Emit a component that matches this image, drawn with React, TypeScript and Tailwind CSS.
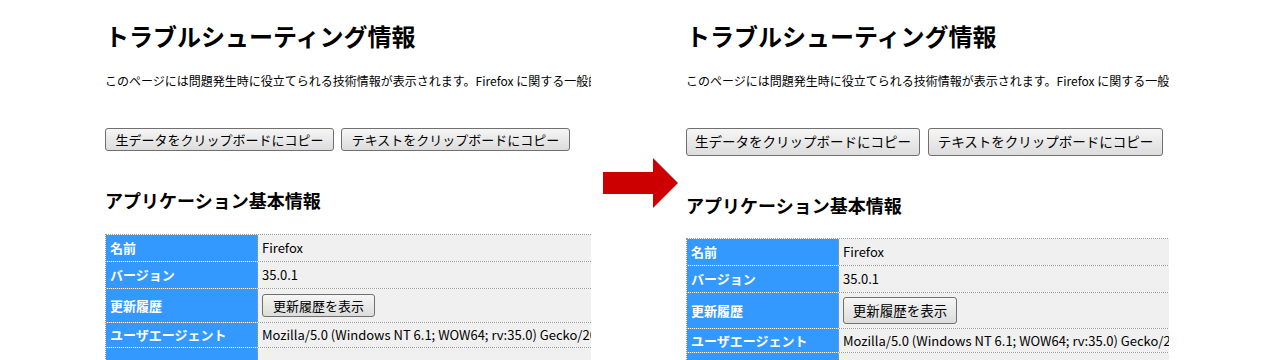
import React from "react";

const rows = [
  { label: "名前", value: "Firefox" },
  { label: "バージョン", value: "35.0.1" },
  { label: "更新履歴", value: "" },
  {
    label: "ユーザエージェント",
    value: "Mozilla/5.0 (Windows NT 6.1; WOW64; rv:35.0) Gecko/20100101 Firefox/35.0",
  },
  { label: "", value: "" },
];

type Variant = "old" | "new";

function Btn({ children, variant, className = "" }: { children: React.ReactNode; variant: Variant; className?: string }) {
  const size = variant === "old" ? "h-[23px] text-[13px]" : "h-[28px] text-[13.5px]";
  return (
    <button
      className={`${size} ${className} shrink-0 rounded-[3px] border border-[#707070] bg-gradient-to-b from-[#f6f6f6] to-[#dcdcdc] text-black leading-none whitespace-nowrap`}
    >
      {children}
    </button>
  );
}

function Panel({ variant }: { variant: Variant }) {
  const old = variant === "old";
  const rowH = old
    ? ["h-[27px]", "h-[27px]", "h-[34px]", "h-[25px]", "h-[27px]"]
    : ["h-[27px]", "h-[27px]", "h-[36px]", "h-[24px]", "h-[27px]"];
  return (
    <div className="text-black">
      <h1 className="mt-[20px] text-[24px] leading-[32px] font-bold whitespace-nowrap">トラブルシューティング情報</h1>
      <p className="mt-[20px] text-[12px] leading-[18px] whitespace-nowrap">
        このページには問題発生時に役立てられる技術情報が表示されます。Firefox に関する一般的な質問の答えは、サポートサイト をご覧ください。
      </p>
      <div className={`flex mt-[38px] ${old ? "gap-[7px]" : "gap-[8px]"}`}>
        <Btn variant={variant} className={old ? "w-[229px]" : "w-[234px]"}>生データをクリップボードにコピー</Btn>
        <Btn variant={variant} className={old ? "w-[229px]" : "w-[235px]"}>テキストをクリップボードにコピー</Btn>
      </div>
      <h2 className="mt-[37px] text-[18px] leading-[24px] font-bold whitespace-nowrap">アプリケーション基本情報</h2>
      <div className={`${old ? "mt-[22px]" : "mt-[21px]"} w-[700px] border-t border-l border-dotted border-[#9a9a9a]`}>
        {rows.map((r, i) => (
          <div key={i} className={`flex ${rowH[i]} border-b border-dotted border-[#9a9a9a]`}>
            <div className="w-[152px] shrink-0 bg-[#3399ff] border-r border-dotted border-[#9a9a9a] pl-[4px] flex items-center text-white text-[13px] font-bold whitespace-nowrap">
              {r.label}
            </div>
            <div className="flex-1 bg-[#f0f0f0] pl-[4px] flex items-center text-[13px] whitespace-nowrap">
              {r.label === "更新履歴" ? (
                <Btn variant={variant} className={old ? "w-[113px]" : "w-[114px] !h-[27px]"}>更新履歴を表示</Btn>
              ) : (
                r.value
              )}
            </div>
          </div>
        ))}
      </div>
    </div>
  );
}

export default function App() {
  return (
    <div className="w-[1280px] h-[360px] overflow-hidden bg-white flex font-['Noto_Sans_CJK_JP','Noto_Sans',sans-serif]">
      <div className="w-[591px] h-[360px] overflow-hidden pl-[105px] shrink-0">
        <Panel variant="old" />
      </div>
      <div className="w-[95px] shrink-0 flex items-start justify-center">
        <svg className="mt-[158px] ml-[4px]" width="76" height="50" viewBox="0 0 76 50">
          <polygon points="0,14 50,14 50,0 75,25 50,50 50,36 0,36" fill="#cc0000" />
        </svg>
      </div>
      <div className="w-[483px] h-[360px] overflow-hidden shrink-0">
        <Panel variant="new" />
      </div>
    </div>
  );
}
